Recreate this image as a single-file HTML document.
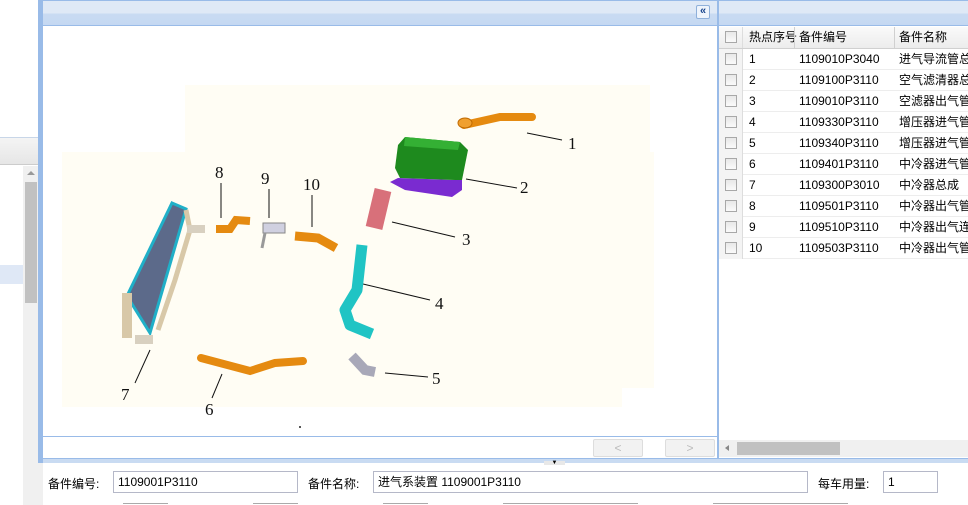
<!DOCTYPE html>
<html><head><meta charset="utf-8"><style>
*{margin:0;padding:0;box-sizing:border-box}
body{width:968px;height:505px;overflow:hidden;background:#fff;position:relative;font-family:"Liberation Sans","Noto Sans CJK SC",sans-serif;font-size:12px;color:#000}
.abs{position:absolute}
.hdr{background:linear-gradient(#dfe9f6 0,#dfe9f6 12px,#c9dbf2 13px,#c4d8f2 25px);border-bottom:1px solid #99bbe8;border-top:1px solid #99bbe8}
.row{position:absolute;left:719px;width:249px;height:21px;border-bottom:1px solid #ededed;font-size:12px;line-height:20px}
.cb{position:absolute;left:6px;top:4px;width:12px;height:12px;border:1px solid #a8a8a8;background:linear-gradient(#e8e8e8,#fafafa)}
.cbcol{position:absolute;left:0;top:0;width:24px;height:21px;background:#f4f4f4;border-right:1px solid #ddd}
.c2{position:absolute;left:30px}.c3{position:absolute;left:80px}.c4{position:absolute;left:180px;white-space:nowrap}
.inp{position:absolute;top:471px;height:22px;border:1px solid #b5b8c8;background:#fff;font-size:12px;line-height:20px;padding-left:4px}
.lbl{position:absolute;top:475px;font-size:12px}
.btn{position:absolute;top:439px;width:50px;height:18px;border:1px solid #ddd;border-radius:2px;background:#f2f2f2;color:#bbb;text-align:center;line-height:16px;font-size:12px}
</style></head><body>
<div class="abs" style="left:0;top:137px;width:38px;height:1px;background:#c8d6e8"></div>
<div class="abs" style="left:0;top:138px;width:38px;height:27px;background:linear-gradient(#f4f4f4,#e6e6e6);border-bottom:1px solid #ccc"></div>
<div class="abs" style="left:0;top:265px;width:23px;height:19px;background:#dfe8f6"></div>
<div class="abs" style="left:23px;top:166px;width:15px;height:339px;background:#f0f0f0"></div>
<div class="abs" style="left:25px;top:182px;width:12px;height:121px;background:#c1c1c1"></div>
<div class="abs" style="left:27px;top:171px;width:0;height:0;border:4px solid transparent;border-bottom:4px solid #999;border-top:0"></div>
<div class="abs" style="left:38px;top:0;width:5px;height:505px;background:#99bbe8"></div>
<div class="abs hdr" style="left:43px;top:0;width:674px;height:26px"></div>
<div class="abs" style="left:696px;top:5px;width:14px;height:14px;border:1px solid #8fb0da;border-radius:2px;background:#eef4fc;color:#15428b;font-size:11px;line-height:11px;text-align:center;font-weight:bold">«</div>
<svg class="abs" style="left:43px;top:26px" width="674" height="411" viewBox="43 26 674 411">
<rect x="62" y="152" width="592" height="236" fill="#fffdf4"/>
<rect x="185" y="85" width="465" height="70" fill="#fffdf4"/>
<rect x="62" y="385" width="560" height="22" fill="#fffdf4"/>
<g font-family="Liberation Serif,serif" font-size="17" fill="#111">
<text x="568" y="149">1</text><text x="520" y="193">2</text><text x="462" y="245">3</text><text x="435" y="309">4</text><text x="432" y="384">5</text><text x="205" y="415">6</text><text x="121" y="400">7</text><text x="215" y="178">8</text><text x="261" y="184">9</text><text x="303" y="190">10</text>
</g>
<g stroke="#111" stroke-width="1">
<line x1="527" y1="133" x2="562" y2="140"/><line x1="466" y1="179" x2="517" y2="188"/><line x1="392" y1="222" x2="455" y2="237"/><line x1="363" y1="284" x2="430" y2="300"/><line x1="385" y1="373" x2="428" y2="377"/><line x1="222" y1="374" x2="212" y2="398"/><line x1="150" y1="350" x2="135" y2="383"/><line x1="221" y1="183" x2="221" y2="218"/><line x1="269" y1="189" x2="269" y2="218"/><line x1="312" y1="195" x2="312" y2="227"/>
</g>
<path d="M464 125 L500 117 L532 117" stroke="#e58a10" stroke-width="8" fill="none" stroke-linecap="round"/>
<ellipse cx="465" cy="123" rx="7" ry="5" fill="#f0a030" stroke="#c06a00"/>
<polygon points="390,182 398,178 455,180 462,168 462,190 452,197 405,190" fill="#7a2bd0"/>
<polygon points="398,145 405,137 460,142 468,150 462,180 455,180 400,178 395,168" fill="#1e8a1e"/>
<polygon points="405,137 460,142 458,150 404,146" fill="#34b034"/>
<path d="M383 190 L374 228" stroke="#d8707a" stroke-width="17" fill="none"/>
<path d="M362 245 L357 290 L345 310 L350 325 L372 334" stroke="#20c4c4" stroke-width="11" fill="none" stroke-linejoin="round"/>
<path d="M352 356 L365 370 L375 372" stroke="#a8a8b8" stroke-width="10" fill="none"/>
<path d="M201 358 L250 371 L275 363 L303 361" stroke="#e58a10" stroke-width="8" fill="none" stroke-linecap="round"/>
<polygon points="172,203 186,209 150,333 127,296" fill="#5c6a8a" stroke="#20b0c8" stroke-width="3"/>
<path d="M186 210 L190 230 L175 280 L158 330" stroke="#d8c8a8" stroke-width="5" fill="none"/>
<rect x="187" y="225" width="18" height="8" fill="#d8d0c0"/>
<rect x="135" y="335" width="18" height="9" fill="#d8d0c0"/>
<rect x="122" y="293" width="10" height="45" fill="#d8c8a8"/>
<path d="M216 229 L230 229 L236 220 L250 221" stroke="#e58a10" stroke-width="8" fill="none"/>
<rect x="263" y="223" width="22" height="10" fill="#d0d0e0" stroke="#888"/>
<path d="M265 233 L262 248" stroke="#999" stroke-width="3"/>
<path d="M295 236 L318 238 L336 248" stroke="#e58a10" stroke-width="9" fill="none"/>
<circle cx="300" cy="427" r="1" fill="#222"/>
</svg>
<div class="abs" style="left:43px;top:436px;width:674px;height:1px;background:#99bbe8"></div>
<div class="btn" style="left:593px">&lt;</div><div class="btn" style="left:665px">&gt;</div>
<div class="abs" style="left:43px;top:458px;width:925px;height:5px;background:#c9dbf2;border-top:1px solid #99bbe8"></div>
<div class="abs" style="left:544px;top:461px;width:21px;height:4px;background:#e8e8e8;font-size:6px;line-height:4px;text-align:center">▼</div>
<div class="abs" style="left:717px;top:0;width:2px;height:458px;background:#99bbe8"></div>
<div class="abs hdr" style="left:719px;top:0;width:249px;height:26px"></div>
<div class="abs" style="left:719px;top:27px;width:249px;height:22px;background:linear-gradient(#fafafa,#ececec);border-bottom:1px solid #d0d0d0;line-height:21px">
<div class="cbcol" style="background:none"><div class="cb"></div></div>
<span class="c2">热点序号</span><span class="abs" style="left:75px;top:0;width:1px;height:21px;background:#d0d0d0"></span><span class="c3">备件编号</span><span class="abs" style="left:175px;top:0;width:1px;height:21px;background:#d0d0d0"></span><span class="c4">备件名称</span></div>
<div class="row" style="top:49px"><div class="cbcol"><div class="cb"></div></div><span class="c2">1</span><span class="c3">1109010P3040</span><span class="c4">进气导流管总</span></div>
<div class="row" style="top:70px"><div class="cbcol"><div class="cb"></div></div><span class="c2">2</span><span class="c3">1109100P3110</span><span class="c4">空气滤清器总</span></div>
<div class="row" style="top:91px"><div class="cbcol"><div class="cb"></div></div><span class="c2">3</span><span class="c3">1109010P3110</span><span class="c4">空滤器出气管</span></div>
<div class="row" style="top:112px"><div class="cbcol"><div class="cb"></div></div><span class="c2">4</span><span class="c3">1109330P3110</span><span class="c4">增压器进气管</span></div>
<div class="row" style="top:133px"><div class="cbcol"><div class="cb"></div></div><span class="c2">5</span><span class="c3">1109340P3110</span><span class="c4">增压器进气管</span></div>
<div class="row" style="top:154px"><div class="cbcol"><div class="cb"></div></div><span class="c2">6</span><span class="c3">1109401P3110</span><span class="c4">中冷器进气管</span></div>
<div class="row" style="top:175px"><div class="cbcol"><div class="cb"></div></div><span class="c2">7</span><span class="c3">1109300P3010</span><span class="c4">中冷器总成</span></div>
<div class="row" style="top:196px"><div class="cbcol"><div class="cb"></div></div><span class="c2">8</span><span class="c3">1109501P3110</span><span class="c4">中冷器出气管</span></div>
<div class="row" style="top:217px"><div class="cbcol"><div class="cb"></div></div><span class="c2">9</span><span class="c3">1109510P3110</span><span class="c4">中冷器出气连</span></div>
<div class="row" style="top:238px"><div class="cbcol"><div class="cb"></div></div><span class="c2">10</span><span class="c3">1109503P3110</span><span class="c4">中冷器出气管</span></div>
<div class="abs" style="left:719px;top:440px;width:249px;height:17px;background:#f0f0f0"></div>
<div class="abs" style="left:737px;top:442px;width:103px;height:13px;background:#c1c1c1"></div>
<div class="abs" style="left:725px;top:445px;width:0;height:0;border:3px solid transparent;border-right:4px solid #888;border-left:0"></div>
<div class="abs" style="left:23px;top:463px;width:20px;height:42px;background:#f0f0f0"></div>
<span class="lbl" style="left:48px">备件编号:</span><div class="inp" style="left:113px;width:185px">1109001P3110</div>
<span class="lbl" style="left:308px">备件名称:</span><div class="inp" style="left:373px;width:435px">进气系装置 1109001P3110</div>
<span class="lbl" style="left:818px">每车用量:</span><div class="inp" style="left:883px;width:55px">1</div>
<div class="abs" style="left:123px;top:503px;width:45px;height:2px;border-top:1px solid #aaa"></div>
<div class="abs" style="left:253px;top:503px;width:45px;height:2px;border-top:1px solid #aaa"></div>
<div class="abs" style="left:383px;top:503px;width:45px;height:2px;border-top:1px solid #aaa"></div>
<div class="abs" style="left:503px;top:503px;width:135px;height:2px;border-top:1px solid #aaa"></div>
<div class="abs" style="left:713px;top:503px;width:135px;height:2px;border-top:1px solid #aaa"></div>
</body></html>
